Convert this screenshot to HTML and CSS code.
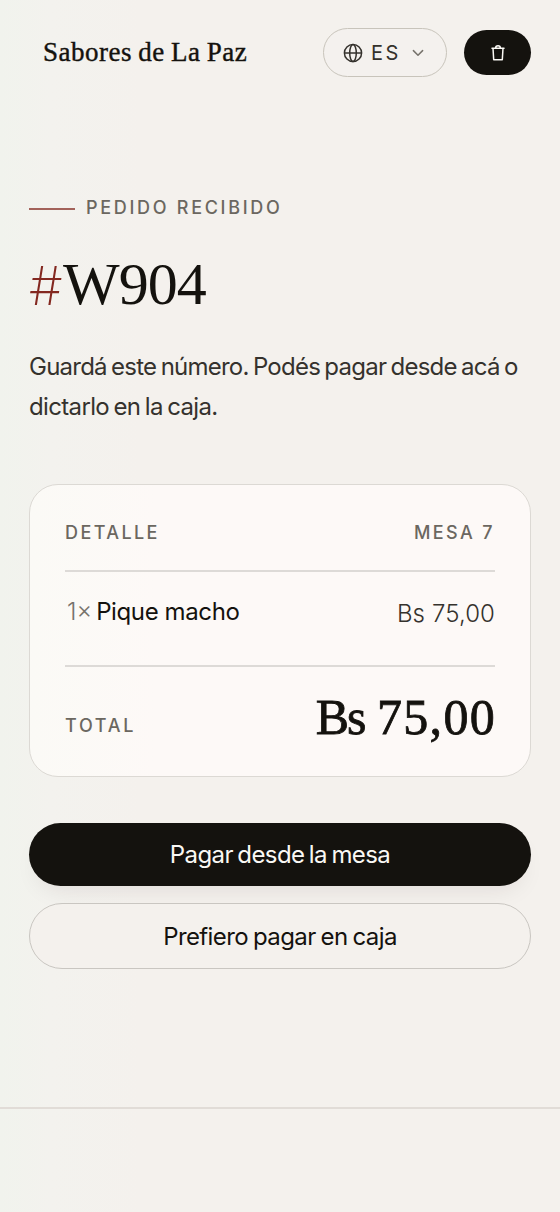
FILE: index.html
```html
<!DOCTYPE html>
<html lang="es">
<head>
<meta charset="utf-8">
<meta name="viewport" content="width=device-width, initial-scale=1">
<title>Sabores de La Paz</title>
<link rel="stylesheet" href="styles.css">
</head>
<body>
<header class="header">
  <a class="brand">Sabores de La Paz</a>
  <div class="actions">
    <button class="lang" aria-label="Idioma">
      <svg class="globe" viewBox="0 0 20 20" fill="none" stroke="currentColor" stroke-width="1.5"><circle cx="10" cy="10" r="8.6"/><ellipse cx="10" cy="10" rx="3.3" ry="8.6"/><path d="M1.400 10h17.200"/></svg>
      <span class="lang-code">ES</span>
      <svg class="chevron" viewBox="0 0 12 8" fill="none" stroke="currentColor" stroke-width="1.5" stroke-linecap="round" stroke-linejoin="round"><path d="M1.400 1.600 6 6.200l4.600-4.600"/></svg>
    </button>
    <button class="cart" aria-label="Pedido">
      <svg class="bag" viewBox="0 0 16 18" fill="none" stroke="currentColor" stroke-width="1.500" stroke-linejoin="round" stroke-linecap="round"><path d="M2 4.300h12M3 4.300l.7 11.500h8.600l.7-11.500M5.600 4.100a2.400 2.400 0 0 1 4.800 0"/></svg>
    </button>
  </div>
</header>
<main class="main">
  <p class="eyebrow"><span class="rule"></span><span class="label eyebrow-text">Pedido recibido</span></p>
  <h1 class="order"><span class="hash">#</span><span class="code">W904</span></h1>
  <p class="intro"><span class="line-a">Guardá este número. Podés pagar desde acá o</span> <span class="line-b">dictarlo en la caja.</span></p>
  <section class="card">
    <div class="card-head"><span class="label detail">Detalle</span><span class="label table-no">Mesa 7</span></div>
    <div class="item"><span class="item-name"><span class="qty">1×</span><span class="dish">Pique macho</span></span><span class="price">Bs 75,00</span></div>
    <div class="total"><span class="label total-label">Total</span><span class="amount"><span class="currency">Bs</span> <span class="figure">75,00</span></span></div>
  </section>
  <div class="buttons">
    <button class="btn primary"><span>Pagar desde la mesa</span></button>
    <button class="btn secondary"><span>Prefiero pagar en caja</span></button>
  </div>
</main>
<footer class="footer"></footer>
</body>
</html>
```
FILE: styles.css
```css
* { box-sizing: border-box; }
body {
  margin: 0;
  min-height: 1212px;
  display: flex;
  flex-direction: column;
  background: linear-gradient(90deg, #f1f3ed 0, #f3f2ee 50px, #f4f1ed 140px, #f4f1ed 100%);
  color: #14120e;
  font-family: Inter, sans-serif;
}
button { font: inherit; color: inherit; padding: 0; margin: 0; }
p, h1 { margin: 0; }
.header {
  height: 106px;
  padding: 28px 29px 0 43px;
  display: flex;
  justify-content: space-between;
  align-items: flex-start;
}
.brand {
  font: 500 27px/49px "Liberation Serif", serif;
  letter-spacing: 0.5px;
  word-spacing: -1px;
  white-space: nowrap;
  -webkit-text-stroke: 0.4px currentColor;
}
.actions { display: flex; gap: 17px; }
.lang {
  width: 124px;
  height: 49px;
  display: flex;
  align-items: center;
  padding-left: 19px;
  background: #f4f1ee;
  border: 1.5px solid #c8c4bb;
  border-radius: 25px;
  color: #34312c;
}
.globe { width: 20px; height: 20px; }
.lang-code { font-size: 20px; line-height: 24px; letter-spacing: 2.4px; margin-left: 8px; }
.chevron { width: 12px; height: 8px; margin-left: 11px; color: #77736c; }
.cart {
  width: 67px;
  height: 45px;
  margin-top: 2px;
  border: 0;
  border-radius: 23px;
  background: #14120e;
  color: #faf8f4;
  display: flex;
  align-items: center;
  justify-content: center;
}
.bag { width: 16px; height: 18px; }
.main { height: 1001px; padding: 90px 29px 0 29px; }
.label {
  font-size: 18px;
  line-height: 24px;
  font-weight: 500;
  text-transform: uppercase;
  letter-spacing: 2.7px;
  color: #6b6760;
}
.eyebrow { display: flex; align-items: center; height: 24px; }
.rule { width: 46px; height: 2px; margin: 2px 11px 0 0; background: #a3625a; }
.order {
  display: flex;
  height: 80px;
  margin-top: 26px;
  font: 400 60px/77px "Liberation Serif", serif;
}
.hash { color: #832820; font-family: Inter, sans-serif; font-weight: 200; font-size: 53px; line-height: 80px; width: 34px; }
.code { letter-spacing: -1px; }
.intro {
  display: flex;
  flex-direction: column;
  margin-top: 21px;
  font-size: 24px;
  line-height: 40px;
  font-weight: 400;
  letter-spacing: -0.76px;
  word-spacing: -1.7px;
  color: #35322d;
  white-space: nowrap;
}
.line-b { letter-spacing: -0.65px; }
.card {
  margin-top: 57px;
  height: 293px;
  padding: 0 35px;
  border: 1.5px solid #dcd9d4;
  border-radius: 29px;
  background: linear-gradient(90deg, #fbfaf6, #fdf9f7 25%, #fdf9f7);
}
.card-head {
  height: 87px;
  padding-top: 36px;
  display: flex;
  justify-content: space-between;
  border-bottom: 2px solid #dddad7;
}
.detail { letter-spacing: 2.4px; }
.table-no { letter-spacing: 2.4px; }
.item {
  height: 95px;
  display: flex;
  justify-content: space-between;
  border-bottom: 2px solid #dddad7;
  font-size: 24px;
  line-height: 30px;
  padding-top: 25px;
}
.qty { color: #77736c; font-weight: 300; margin: 0 4px 0 2px; }
.dish { letter-spacing: -0.38px; font-weight: 400; }
.price { padding-top: 2px; font-weight: 300; letter-spacing: 0.1px; color: #35322d; }
.total { display: flex; justify-content: space-between; height: 107px; }
.total-label { padding-top: 47px; }
.amount { font: 400 50px/60px "Liberation Serif", serif; padding-top: 20px; white-space: nowrap; -webkit-text-stroke: 0.8px currentColor; }
.currency { letter-spacing: -2px; }
.figure { letter-spacing: 1.3px; margin-right: -1px; }
.buttons { display: flex; flex-direction: column; gap: 17px; margin-top: 46px; }
.btn {
  height: 63px;
  border-radius: 33px;
  font-size: 24px;
  letter-spacing: -0.6px;
  word-spacing: -1.7px;
  text-align: center;
}
.primary { background: #14120e; color: #faf8f4; border: 0; box-shadow: 0 12px 24px -10px rgba(40, 20, 30, 0.1); }
.secondary { height: 66px; background: #f4f1ed; border: 1.5px solid #c9c6c1; letter-spacing: -0.6px; word-spacing: -1.2px; }
.footer { height: 105px; border-top: 2px solid #e1dcd7; }
```
